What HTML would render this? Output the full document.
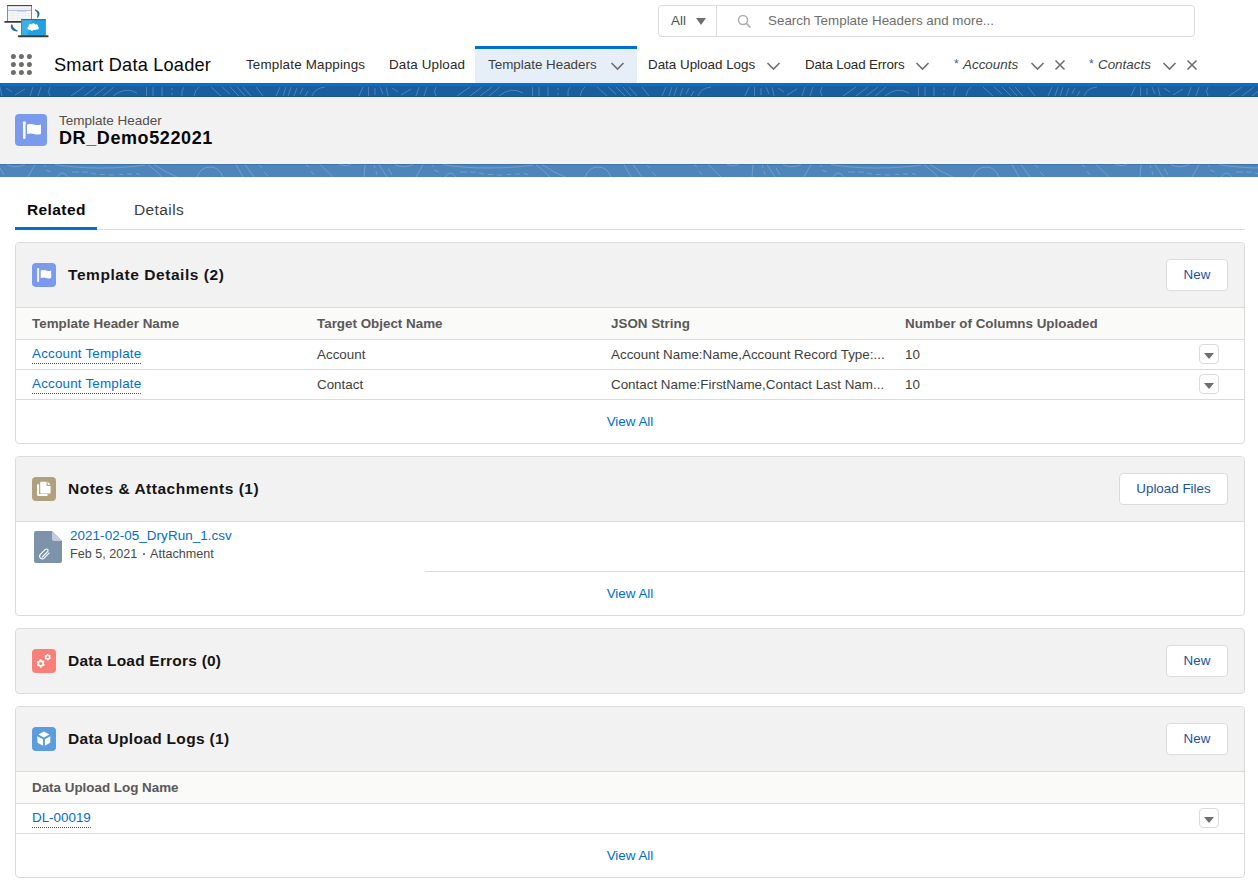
<!DOCTYPE html>
<html><head><meta charset="utf-8">
<style>
*{box-sizing:border-box;margin:0;padding:0}
html,body{width:1258px;height:883px;overflow:hidden;background:#fff}
body{position:relative;font-family:"Liberation Sans",sans-serif;color:#080707;font-size:13.4px}
.a{position:absolute}
.t{position:absolute;white-space:nowrap;line-height:20px}
.lnk{color:#006dcc;letter-spacing:0.2px}
.dot{border-bottom:1px dotted #006dcc;padding-bottom:2px}
.card{position:absolute;left:15px;width:1230px;border:1px solid #dddbda;border-radius:4px;background:#fff;overflow:hidden}
.chead{position:absolute;left:0;top:0;width:100%;background:#f3f2f2;border-bottom:1px solid #dddbda}
.ico{position:absolute;left:16px;width:24px;height:24px;border-radius:4px}
.ctitle{position:absolute;left:52px;font-size:15.5px;font-weight:700;letter-spacing:0.15px;color:#151515;white-space:nowrap;line-height:20px}
.btn{position:absolute;height:32px;border:1px solid #dddbda;border-radius:4px;background:#fff;color:#1d5299;font-size:13.4px;line-height:30px;text-align:center}
.thr{position:absolute;left:0;width:100%;background:#fafaf9;border-bottom:1px solid #dddbda}
.row{position:absolute;left:0;width:100%;border-bottom:1px solid #dddbda}
.th{position:absolute;font-weight:700;color:#5a5856;white-space:nowrap;line-height:20px}
.td{position:absolute;color:#3e3e3c;white-space:nowrap;line-height:20px}
.dd{position:absolute;width:20px;height:20px;border:1px solid #dddbda;border-radius:4px;background:#fff}
.dd:after{content:"";position:absolute;left:4px;top:8px;border-left:5px solid transparent;border-right:5px solid transparent;border-top:6px solid #706e6b}
.va{position:absolute;left:0;width:100%;text-align:center;color:#006dcc;line-height:20px}
</style></head><body>

<!-- logo -->
<svg class="a" style="left:0;top:0" width="52" height="42" viewBox="0 0 52 42">
  <rect x="7" y="5" width="25" height="16.5" rx="0.8" fill="#808080"/>
  <rect x="7" y="5" width="25" height="1.2" rx="0.6" fill="#4a4a4a"/>
  <rect x="7.9" y="6.2" width="23.2" height="15" fill="#f6f6f6"/>
  <g fill="#e2e2e2"><rect x="8" y="8" width="23" height="0.4"/><rect x="8" y="13" width="23" height="0.3"/><rect x="8" y="15.5" width="23" height="0.3"/><rect x="8" y="18" width="23" height="0.3"/><rect x="12" y="10.5" width="0.3" height="10.5"/><rect x="17" y="10.5" width="0.3" height="10.5"/></g>
  <rect x="7.9" y="9.9" width="23.2" height="0.7" fill="#86a0dc"/>
  <rect x="17.5" y="11.2" width="9" height="0.5" fill="#c9a9d6"/>
  <rect x="30.4" y="9.7" width="1.3" height="1.2" fill="#e28a3a"/>
  <rect x="4.2" y="21" width="18" height="1.8" rx="0.9" fill="#3a3a3a"/>
  <rect x="21" y="19.2" width="24.8" height="16.3" rx="0.8" fill="#2a86c4"/>
  <rect x="21" y="19.2" width="24.8" height="1.1" rx="0.5" fill="#1c5f8f"/>
  <rect x="21.8" y="20.3" width="23.2" height="15" fill="#22a0e0"/>
  <path d="M21.8 20.3 H33 L27 35.3 H21.8 Z" fill="#4ab4ea" opacity="0.7"/>
  <g fill="#fff">
    <ellipse cx="33" cy="27.4" rx="4.6" ry="2.6"/><circle cx="30.6" cy="26" r="2"/><circle cx="33.4" cy="25.2" r="2"/><circle cx="36.2" cy="26" r="1.8"/><circle cx="37.4" cy="28" r="1.5"/><circle cx="29" cy="28.3" r="1.5"/><circle cx="32" cy="29.6" r="1.3"/>
  </g>
  <rect x="17.8" y="35.2" width="30.8" height="2" rx="1" fill="#3a3a3a"/>
  <path d="M35.4 10 Q41.2 12.4 37.6 17.2 Q39.4 12.8 35.4 10 Z" fill="#2d6a98" stroke="#2d6a98" stroke-width="1.3" stroke-linejoin="round"/>
  <path d="M11.8 25 Q9.8 29.6 17 30.9 Q12.6 29 11.8 25 Z" fill="#2d6a98" stroke="#2d6a98" stroke-width="1.3" stroke-linejoin="round"/>
</svg>

<!-- search -->
<div class="a" style="left:658px;top:5px;width:537px;height:32px;border:1px solid #dddbda;border-radius:4px;background:#fff"></div>
<div class="a" style="left:716px;top:6px;width:1px;height:30px;background:#dddbda"></div>
<div class="t" style="left:671px;top:11px;color:#514f4d">All</div>
<div class="a" style="left:696px;top:18px;border-left:5px solid transparent;border-right:5px solid transparent;border-top:7px solid #706e6b"></div>
<svg class="a" style="left:737px;top:14px" width="16" height="16" viewBox="0 0 16 16"><circle cx="6" cy="6" r="4.5" stroke="#b0adab" stroke-width="1.5" fill="none"/><path d="M9.3 9.3 L13.5 13.5" stroke="#b0adab" stroke-width="1.7"/></svg>
<div class="t" style="left:768px;top:11px;color:#706e6b">Search Template Headers and more...</div>

<!-- nav -->
<svg class="a" style="left:10px;top:53px" width="23" height="23" viewBox="0 0 23 23">
  <g fill="#706e6b">
  <circle cx="3.4" cy="3.4" r="2.5"/><circle cx="11.4" cy="3.4" r="2.5"/><circle cx="19.4" cy="3.4" r="2.5"/>
  <circle cx="3.4" cy="11.4" r="2.5"/><circle cx="11.4" cy="11.4" r="2.5"/><circle cx="19.4" cy="11.4" r="2.5"/>
  <circle cx="3.4" cy="19.4" r="2.5"/><circle cx="11.4" cy="19.4" r="2.5"/><circle cx="19.4" cy="19.4" r="2.5"/>
  </g>
</svg>
<div class="t" style="left:54px;top:53px;font-size:18.2px;line-height:24px;color:#080707;letter-spacing:0.2px">Smart Data Loader</div>

<div class="a" style="left:475px;top:46px;width:162px;height:37px;background:#e6eef8;border-top:3px solid #0070d2"></div>
<div class="t" style="left:246px;top:55px;color:#2b2826;letter-spacing:0.18px">Template Mappings</div>
<div class="t" style="left:389px;top:55px;color:#2b2826;letter-spacing:0.15px">Data Upload</div>
<div class="t" style="left:488px;top:55px;color:#3e3e3c">Template Headers</div>
<div class="t" style="left:648px;top:55px;color:#2b2826">Data Upload Logs</div>
<div class="t" style="left:805px;top:55px;color:#2b2826;letter-spacing:-0.15px">Data Load Errors</div>
<div class="t" style="left:954px;top:54px;font-size:12px;color:#2a64b0">*</div><div class="t" style="left:963px;top:55px;font-style:italic;color:#3e3e3c">Accounts</div>
<div class="t" style="left:1089px;top:54px;font-size:12px;color:#2a64b0">*</div><div class="t" style="left:1098px;top:55px;font-style:italic;color:#3e3e3c">Contacts</div>
<svg class="a" style="left:0;top:0;width:1258px;height:83px" width="1258" height="83">
  <g stroke="#706e6b" stroke-width="1.6" fill="none">
    <path d="M611.5 63 L617.5 69 L623.5 63"/>
    <path d="M767.5 63 L773.5 69 L779.5 63"/>
    <path d="M916.5 63 L922.5 69 L928.5 63"/>
    <path d="M1031.5 63 L1037.5 69 L1043.5 63"/>
    <path d="M1055.5 60.5 L1064.5 69.5 M1064.5 60.5 L1055.5 69.5"/>
    <path d="M1163.5 63 L1169.5 69 L1175.5 63"/>
    <path d="M1187.5 60.5 L1196.5 69.5 M1196.5 60.5 L1187.5 69.5"/>
  </g>
</svg>

<!-- blue bands -->
<div class="a" style="left:0;top:83px;width:1258px;height:3px;background:#0070d2"></div>
<div class="a" style="left:0;top:86px;width:1258px;height:11px;background:#1b5e9e"></div>
<div class="a" style="left:0;top:96px;width:1258px;height:1px;background:#15558f"></div>
<svg class="a" style="left:0;top:86px" width="1258" height="11">
  <defs><pattern id="p1" x="0" y="0" width="386" height="11" patternUnits="userSpaceOnUse">
  <path d="M0 1L2 10M6 2L12 6M15 9L25 3M30 10L33 1M38 10L41 1M50 10Q47 5 50 1M71 10L84 1M84 10L96 1M94 10L106 1M103 10L114 1M113 10Q125 0 137 7M146.5 1V10M153 1V10M162 1V10M172 2V4M172 7V9M182 10Q181 5 184 1M194 10Q195 4 199 1M211 1L221 10M222 1L230 8M230 1L239 10M237 1L245 10M243 1L251 10M256 1L263 10M276 10L280 1M283 10L286 1M288 10L291 1M294 10L297 2M300 8L303 2M305 10L308 5M312 10Q315 2 325 1M359 10L363 1M368.5 1V10M375 2V9M380 1L383 8" stroke="#fff" stroke-opacity="0.22" stroke-width="1" fill="none"/>
  </pattern></defs>
  <rect width="1258" height="11" fill="url(#p1)"/>
</svg>
<div class="a" style="left:0;top:97px;width:1258px;height:67px;background:#f3f2f2"></div>
<div class="a" style="left:0;top:164px;width:1258px;height:13px;background:#4e86bc"></div>
<div class="a" style="left:0;top:164px;width:1258px;height:1px;background:#3d74ab"></div>
<svg class="a" style="left:0;top:164px" width="1258" height="13">
  <defs><pattern id="p2" x="0" y="0" width="388" height="13" patternUnits="userSpaceOnUse">
  <path d="M0 4L4 11M7 0.5Q15 5 25 0.5M28 13L35 0.5M45 1V3M46 6L51 8M72 8H79M82 8H88M91 9L96 10M100 10.5H105M109 11H114M119 10.5H123M127 10H132M136 9.5L140 10.5M55 0.5Q75 4 100 4Q125 4 145 1M57 13Q62 5 68 13M148 0.5Q155 6 162 13M154 0.5Q165 8 177 13M197 13Q201 3 210 3Q219 3 223 13M236 0.5L243 13M245 0.5L254 13M259 1L262 4M264 8L268 12M306 0.5L309 3M311 7L314 11M320 0.5L333 13M339 0.5Q345 2.5 351 0.5M365 0.5L364 13M374 1L375 4M376 7L377 11M379 0.5L387 13" stroke="#fff" stroke-opacity="0.2" stroke-width="1" fill="none"/>
  </pattern></defs>
  <rect width="1258" height="13" fill="url(#p2)"/>
</svg>

<!-- record header -->
<div class="a" style="left:15px;top:114px;width:32px;height:32px;border-radius:4px;background:#7b9aee"></div>
<svg class="a" style="left:15px;top:114px" width="32" height="32" viewBox="0 0 32 32">
  <rect x="8" y="8" width="2.5" height="17" rx="1.2" fill="#fff"/>
  <circle cx="9.25" cy="8.8" r="1.6" fill="#fff"/>
  <path d="M12 10.5 Q16 9.5 19 10.5 T26 10.5 V20 Q22 21 19 20 T12 20 Z" fill="#fff"/>
</svg>
<div class="t" style="left:59px;top:111px;font-size:13.5px;color:#514f4d">Template Header</div>
<div class="t" style="left:59px;top:126px;font-size:18px;line-height:24px;font-weight:700;color:#080707;letter-spacing:0.6px">DR_Demo522021</div>

<!-- tabs -->
<div class="a" style="left:15px;top:229px;width:1230px;height:1px;background:#dddbda"></div>
<div class="a" style="left:15px;top:227px;width:82px;height:3px;background:#0070d2"></div>
<div class="t" style="left:27px;top:200px;font-size:15.5px;font-weight:700;color:#080707;letter-spacing:0.4px">Related</div>
<div class="t" style="left:134px;top:200px;font-size:15.5px;color:#3e3e3c;letter-spacing:0.4px">Details</div>

<!-- card 1 -->
<div class="card" style="top:242px;height:202px">
  <div class="chead" style="height:65px"></div>
  <div class="ico" style="top:20px;background:#7b9aee"></div>
  <svg class="a" style="left:16px;top:20px" width="24" height="24" viewBox="0 0 24 24">
    <rect x="5.2" y="5.6" width="1.9" height="13.4" rx="0.9" fill="#fff"/><circle cx="6.15" cy="6" r="1.1" fill="#fff"/>
    <path d="M8.7 7.6 Q11.5 6.6 14.2 7.6 T19.2 7.4 V14.9 Q16.5 15.9 14 15 T8.7 15 Z" fill="#fff"/>
  </svg>
  <div class="ctitle" style="top:22px;letter-spacing:0.56px">Template Details (2)</div>
  <div class="btn" style="left:1150px;top:16px;width:62px">New</div>
  <div class="thr" style="top:65px;height:32px"></div>
  <div class="th" style="left:16px;top:71px">Template Header Name</div>
  <div class="th" style="left:301px;top:71px">Target Object Name</div>
  <div class="th" style="left:595px;top:71px">JSON String</div>
  <div class="th" style="left:889px;top:71px">Number of Columns Uploaded</div>
  <div class="row" style="top:97px;height:30px"></div>
  <div class="row" style="top:127px;height:30px"></div>
  <div class="td" style="left:16px;top:101px"><span class="lnk dot">Account Template</span></div>
  <div class="td" style="left:301px;top:102px">Account</div>
  <div class="td" style="left:595px;top:102px">Account Name:Name,Account Record Type:...</div>
  <div class="td" style="left:889px;top:102px">10</div>
  <div class="dd" style="left:1183px;top:101px"></div>
  <div class="td" style="left:16px;top:131px"><span class="lnk dot">Account Template</span></div>
  <div class="td" style="left:301px;top:132px">Contact</div>
  <div class="td" style="left:595px;top:132px">Contact Name:FirstName,Contact Last Nam...</div>
  <div class="td" style="left:889px;top:132px">10</div>
  <div class="dd" style="left:1183px;top:131px"></div>
  <div class="va" style="top:169px">View All</div>
</div>

<!-- card 2 -->
<div class="card" style="top:456px;height:160px">
  <div class="chead" style="height:65px"></div>
  <div class="ico" style="top:20px;background:#b1a07d"></div>
  <svg class="a" style="left:16px;top:20px" width="24" height="24" viewBox="0 0 24 24">
    <path d="M5.1 7.3 H7.1 V17 H15.5 V19 H5.8 Q5.1 19 5.1 18.3 Z" fill="#fff"/>
    <path d="M9 4.7 H14.6 V8.2 Q14.6 9 15.4 9 H18.6 V15.7 Q18.6 16.5 17.8 16.5 H9 Q8.2 16.5 8.2 15.7 V5.5 Q8.2 4.7 9 4.7 Z" fill="#fff"/>
    <path d="M15.6 4.7 L18.6 7.8 H16.1 Q15.6 7.8 15.6 7.3 Z" fill="#fff"/>
  </svg>
  <div class="ctitle" style="top:22px;letter-spacing:0.51px">Notes &amp; Attachments (1)</div>
  <div class="btn" style="left:1103px;top:16px;width:109px">Upload Files</div>
  <svg class="a" style="left:18px;top:74px" width="28" height="32" viewBox="0 0 28 32">
    <path d="M2 0 H18 L28 10 V30 Q28 32 26 32 H2 Q0 32 0 30 V2 Q0 0 2 0 Z" fill="#7d93ab"/>
    <path d="M18 0 L28 10 H20 Q18 10 18 8 Z" fill="#c3ccd8"/>
    <g transform="translate(10 22) rotate(-45)" fill="none" stroke="#fff" stroke-width="1.1">
      <path d="M-4.5 1.6 H3.5 A1.6 1.6 0 0 0 3.5 -1.6 H-3.5 A2.6 2.6 0 0 0 -3.5 3.6 H4"/>
    </g>
  </svg>
  <div class="td" style="left:54px;top:69px"><span class="lnk" style="letter-spacing:0.08px">2021-02-05_DryRun_1.csv</span></div>
  <div class="td" style="left:54px;top:87px;font-size:12.6px;color:#4a4846">Feb 5, 2021</div><div class="a" style="left:127px;top:96px;width:2px;height:2px;border-radius:50%;background:#514f4d"></div><div class="td" style="left:134px;top:87px;font-size:12.6px;color:#4a4846">Attachment</div>
  <div class="a" style="left:409px;top:114px;width:830px;height:1px;background:#dddbda"></div>
  <div class="va" style="top:127px">View All</div>
</div>

<!-- card 3 -->
<div class="card" style="top:628px;height:66px;background:#f3f2f2">
  <div class="ico" style="top:20px;background:#f88078"></div>
  <svg class="a" style="left:16px;top:20px" width="24" height="24" viewBox="0 0 24 24">
    <path d="M7.86 10.18 L8.98 10.11 L9.76 11.28 L10.53 11.66 L11.93 11.56 L12.56 12.50 L11.94 13.76 L11.99 14.62 L12.77 15.78 L12.28 16.79 L10.88 16.88 L10.16 17.36 L9.54 18.62 L8.42 18.69 L7.64 17.52 L6.87 17.14 L5.47 17.24 L4.84 16.30 L5.46 15.04 L5.41 14.18 L4.63 13.02 L5.12 12.01 L6.52 11.92 L7.24 11.44 Z" fill="#fff"/><circle cx="8.7" cy="14.4" r="1.5" fill="#f88078"/>
    <path d="M15.06 4.96 L15.92 4.91 L16.54 5.74 L17.14 6.04 L18.18 6.02 L18.66 6.74 L18.25 7.69 L18.29 8.37 L18.82 9.26 L18.44 10.03 L17.41 10.15 L16.85 10.53 L16.34 11.44 L15.48 11.49 L14.86 10.66 L14.26 10.36 L13.22 10.38 L12.74 9.66 L13.15 8.71 L13.11 8.03 L12.58 7.14 L12.96 6.37 L13.99 6.25 L14.55 5.87 Z" fill="#fff"/><circle cx="15.7" cy="8.2" r="1.1" fill="#f88078"/>
  </svg>
  <div class="ctitle" style="top:22px;letter-spacing:0.21px">Data Load Errors (0)</div>
  <div class="btn" style="left:1150px;top:16px;width:62px">New</div>
</div>

<!-- card 4 -->
<div class="card" style="top:706px;height:172px">
  <div class="chead" style="height:65px"></div>
  <div class="ico" style="top:20px;background:#5a9cdd"></div>
  <svg class="a" style="left:16px;top:20px" width="24" height="24" viewBox="0 0 24 24">
    <path d="M11.9 4.6 L17.4 7.4 L11.9 10.4 L6.4 7.4 Z" fill="#fff"/>
    <path d="M5.2 9.3 L11 12.3 V18.7 L5.5 15.8 Z" fill="#fff"/>
    <path d="M18.4 9.3 L12.9 12.3 V18.7 L18.2 15.8 Z" fill="#fff"/>
  </svg>
  <div class="ctitle" style="top:22px;letter-spacing:0.32px">Data Upload Logs (1)</div>
  <div class="btn" style="left:1150px;top:16px;width:62px">New</div>
  <div class="thr" style="top:65px;height:32px"></div>
  <div class="th" style="left:16px;top:71px">Data Upload Log Name</div>
  <div class="row" style="top:97px;height:30px"></div>
  <div class="td" style="left:16px;top:101px"><span class="lnk dot" style="letter-spacing:0">DL-00019</span></div>
  <div class="dd" style="left:1183px;top:101px"></div>
  <div class="va" style="top:139px">View All</div>
</div>

</body></html>
